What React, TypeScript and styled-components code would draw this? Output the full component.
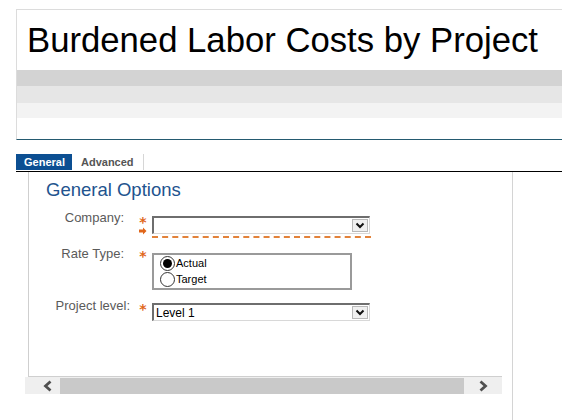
import React from "react";
import styled, { createGlobalStyle } from "styled-components";

const Global = createGlobalStyle`
  html, body { margin: 0; padding: 0; background: #fff; }
  body { font-family: "Liberation Sans", Arial, sans-serif; overflow: hidden; }
  #root { width: 562px; height: 420px; overflow: hidden; }
`;

const Page = styled.div`
  padding: 9px 0 0 16px;
  display: flex;
  flex-direction: column;
  height: 411px;
`;

const Header = styled.header`
  border-top: 1px solid #dcdcdc;
  border-left: 1px solid #dcdcdc;
  border-bottom: 1px solid #245a70;
  display: flex;
  flex-direction: column;
`;

const Title = styled.h1`
  margin: 0;
  height: 60px;
  box-sizing: border-box;
  padding: 10px 0 0 10px;
  font-size: 34.7px;
  line-height: 40px;
  font-weight: normal;
  color: #000;
  white-space: nowrap;
`;

const Band = styled.div<{ $h: number; $c: string }>`
  height: ${(p) => p.$h}px;
  background: ${(p) => p.$c};
`;

const TabBar = styled.nav`
  margin-top: 14px;
  height: 17px;
  border-bottom: 1px solid #000;
  display: flex;
  align-items: stretch;
`;

const Tab = styled.div<{ $active?: boolean }>`
  display: flex;
  align-items: center;
  padding: 0 ${(p) => (p.$active ? "8px 0 8px" : "9px")};
  width: ${(p) => (p.$active ? "56px" : "auto")};
  box-sizing: border-box;
  font-size: 11px;
  font-weight: bold;
  color: ${(p) => (p.$active ? "#fff" : "#555")};
  background: ${(p) => (p.$active ? "#0c4f92" : "transparent")};
  border-right: ${(p) => (p.$active ? "none" : "1px solid #d6d6d6")};
  height: 16px;
`;

const Body = styled.div`
  flex: 1;
  display: flex;
`;

const Frame = styled.div`
  margin-left: 12px;
  width: 484px;
  border-right: 1px solid #d4d4d4;
  display: flex;
  flex-direction: column;
`;

const Content = styled.section`
  width: 474px;
  height: 205px;
  box-sizing: border-box;
  border-left: 1px solid #cfcfcf;
  border-bottom: 1px solid #cfcfcf;
  padding: 7px 0 0 17px;
`;

const Heading = styled.h2`
  margin: 0 0 10px 0;
  font-size: 18.5px;
  line-height: 21px;
  font-weight: normal;
  color: #22538e;
`;

const Form = styled.div`
  display: grid;
  grid-template-columns: 92px 14px auto;
  row-gap: 8px;
  align-items: start;
`;

const Label = styled.label<{ $pr?: number }>`
  font-size: 13px;
  line-height: 16px;
  color: #5a5a5a;
  text-align: right;
  padding-right: ${(p) => p.$pr ?? 14}px;
  white-space: nowrap;
`;

const Marker = styled.div<{ $top: number }>`
  margin-top: ${(p) => p.$top}px;
  display: flex;
  flex-direction: column;
  align-items: center;
  width: 10px;
  color: #e0661a;
`;

const Star = styled.span`
  font-size: 14px;
  line-height: 9px;
  font-weight: bold;
  font-family: "DejaVu Sans", sans-serif;
`;

const Field = styled.div<{ $top: number; $dashed?: boolean }>`
  margin-top: ${(p) => p.$top}px;
  padding-bottom: ${(p) => (p.$dashed ? "2px" : "0")};
  border-bottom: ${(p) => (p.$dashed ? "2px dashed #e2823a" : "none")};
  width: ${(p) => (p.$dashed ? "219px" : "auto")};
`;

const Select = styled.div`
  width: 218px;
  height: 18px;
  box-sizing: border-box;
  border-top: 2px solid #6e6e6e;
  border-left: 2px solid #6e6e6e;
  border-right: 1px solid #d8d8d8;
  border-bottom: 1px solid #d8d8d8;
  background: #fff;
  display: flex;
  align-items: center;
  justify-content: space-between;
  font-size: 12px;
  color: #000;
  padding-left: 2px;
`;

const DropBtn = styled.span`
  width: 16px;
  height: 13px;
  margin-right: 1px;
  box-sizing: border-box;
  background: #f0f0f0;
  border: 1px solid #b8b8b8;
  display: flex;
  align-items: center;
  justify-content: center;
`;

const RadioBox = styled.div`
  width: 200px;
  height: 37px;
  box-sizing: border-box;
  border: 2px solid #9a9a9a;
  padding: 0 0 0 6px;
  display: flex;
  flex-direction: column;
`;

const RadioRow = styled.div`
  display: flex;
  align-items: center;
  height: 16px;
  font-size: 11px;
  color: #000;
`;

const Circle = styled.span<{ $on?: boolean }>`
  width: 15px;
  height: 15px;
  box-sizing: border-box;
  border-radius: 50%;
  border: 1px solid #333;
  background: #fff;
  display: flex;
  align-items: center;
  justify-content: center;
  margin-right: 1px;
  &::after {
    content: "";
    width: 9px;
    height: 9px;
    border-radius: 50%;
    background: ${(p) => (p.$on ? "#000" : "transparent")};
  }
`;

const ScrollBar = styled.div`
  margin-left: -3px;
  width: 477px;
  height: 17px;
  background: #efefef;
  display: flex;
  align-items: center;
`;

const ArrowBtn = styled.span<{ $w: number; $pl?: number }>`
  width: ${(p) => p.$w}px;
  height: 17px;
  box-sizing: border-box;
  padding-left: ${(p) => p.$pl ?? 0}px;
  display: flex;
  align-items: center;
  justify-content: center;
`;

const Thumb = styled.span`
  width: 404px;
  height: 16px;
  background: #c9c9c9;
`;

const Chevron = ({ dir }: { dir: "down" | "left" | "right" }) => {
  if (dir === "down")
    return (
      <svg width="10" height="7" viewBox="0 0 10 7">
        <path d="M1.5 1.5 L5 5 L8.5 1.5" fill="none" stroke="#111" strokeWidth="2" />
      </svg>
    );
  const d = dir === "left" ? "M7.5 1.5 L2.5 6 L7.5 10.5" : "M2.5 1.5 L7.5 6 L2.5 10.5";
  return (
    <svg width="10" height="12" viewBox="0 0 10 12">
      <path d={d} fill="none" stroke="#505050" strokeWidth="2.8" />
    </svg>
  );
};

const Arrow = () => (
  <svg width="8" height="8" viewBox="0 0 8 8">
    <path d="M0 2.5 H4 V0.5 L7.5 4 L4 7.5 V5.5 H0 Z" fill="#e0661a" />
  </svg>
);

export default function App() {
  return (
    <>
      <Global />
      <Page>
        <Header>
          <Title>Burdened Labor Costs by Project</Title>
          <Band $h={16} $c="#d3d3d3" />
          <Band $h={17} $c="#e6e6e6" />
          <Band $h={15} $c="#f3f3f3" />
          <Band $h={21} $c="#fff" />
        </Header>
        <TabBar>
          <Tab $active>General</Tab>
          <Tab>Advanced</Tab>
        </TabBar>
        <Body>
          <Frame>
            <Content>
              <Heading>General Options</Heading>
              <Form>
                <Label>Company:</Label>
                <Marker $top={8}>
                  <Star>*</Star>
                  <Arrow />
                </Marker>
                <Field $top={6} $dashed>
                  <Select>
                    <span />
                    <DropBtn>
                      <Chevron dir="down" />
                    </DropBtn>
                  </Select>
                </Field>

                <Label>Rate Type:</Label>
                <Marker $top={6}>
                  <Star>*</Star>
                </Marker>
                <Field $top={7}>
                  <RadioBox>
                    <RadioRow>
                      <Circle $on />
                      Actual
                    </RadioRow>
                    <RadioRow>
                      <Circle />
                      Target
                    </RadioRow>
                  </RadioBox>
                </Field>

                <Label $pr={8}>Project level:</Label>
                <Marker $top={7}>
                  <Star>*</Star>
                </Marker>
                <Field $top={5}>
                  <Select>
                    <span>Level 1</span>
                    <DropBtn>
                      <Chevron dir="down" />
                    </DropBtn>
                  </Select>
                </Field>
              </Form>
            </Content>
            <ScrollBar>
              <ArrowBtn $w={35} $pl={10}>
                <Chevron dir="left" />
              </ArrowBtn>
              <Thumb />
              <ArrowBtn $w={38}>
                <Chevron dir="right" />
              </ArrowBtn>
            </ScrollBar>
          </Frame>
        </Body>
      </Page>
    </>
  );
}
